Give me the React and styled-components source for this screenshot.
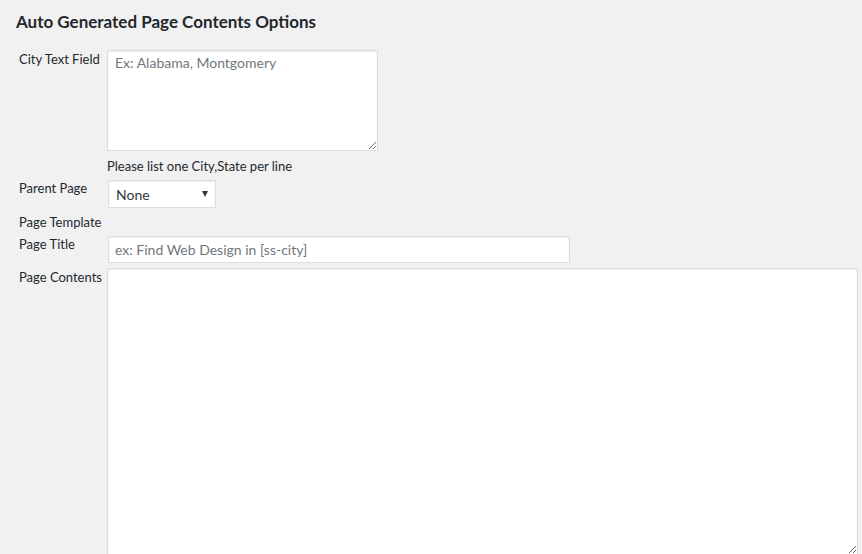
import styled, { createGlobalStyle } from "styled-components";

const GlobalStyle = createGlobalStyle`
  html, body {
    margin: 0;
    padding: 0;
    background: #f1f1f1;
  }
  body {
    font-family: Lato, "Open Sans", sans-serif;
    color: #23282d;
    font-size: 13px;
    overflow: hidden;
  }
`;

const Page = styled.div`
  padding: 11px 4px 0 16px;
`;

const Heading = styled.h2`
  margin: 0 0 17px;
  font-size: 17px;
  line-height: 22px;
  font-weight: 700;
  color: #23282d;
`;

const Form = styled.div`
  display: flex;
  flex-direction: column;
  padding-left: 3px;
`;

const Row = styled.div`
  display: grid;
  grid-template-columns: ${(p) => (p.$wide ? "88px 1fr" : "88px auto")};
  justify-content: start;
  align-items: start;
  margin-top: ${(p) => p.$gap || 0}px;
`;

const Label = styled.label`
  padding-top: ${(p) => p.$top || 0}px;
  font-size: 13px;
  line-height: 16px;
  color: #23282d;
  white-space: nowrap;
`;

const Field = styled.div`
  padding-left: ${(p) => p.$shift || 0}px;
`;

const fieldBase = `
  box-sizing: border-box;
  border: 1px solid #ddd;
  background: #fff;
  box-shadow: inset 0 1px 2px rgba(0, 0, 0, 0.07);
  color: #32373c;
  font-family: Lato, "Open Sans", sans-serif;
  font-size: 14px;
  outline: none;
  margin: 0;
  &::placeholder {
    color: #72777c;
  }
`;

const TextArea = styled.textarea`
  ${fieldBase}
  display: block;
  width: ${(p) => p.$w};
  height: ${(p) => p.$h}px;
  padding: 2px 7px;
  line-height: 20px;
`;

const TextInput = styled.input`
  ${fieldBase}
  display: block;
  width: 462px;
  height: 27px;
  padding: 0 6px;
`;

const Help = styled.p`
  margin: 0;
  padding-top: 7px;
  font-size: 13px;
  line-height: 16px;
  color: #23282d;
`;

const SelectWrap = styled.div`
  position: relative;
  width: 108px;
`;

const Select = styled.select`
  ${fieldBase}
  appearance: none;
  -webkit-appearance: none;
  display: block;
  width: 108px;
  height: 28px;
  padding: 0 24px 0 7px;
`;

const Arrow = styled.span`
  position: absolute;
  right: 8px;
  top: 11px;
  width: 0;
  height: 0;
  border-left: 3.5px solid transparent;
  border-right: 3.5px solid transparent;
  border-top: 6px solid #32373c;
  pointer-events: none;
`;

export default function App() {
  return (
    <Page>
      <GlobalStyle />
      <Heading>Auto Generated Page Contents Options</Heading>
      <Form>
        <Row>
          <Label $top={1}>City Text Field</Label>
          <Field>
            <TextArea $w="271px" $h={101} placeholder="Ex: Alabama, Montgomery" />
            <Help>Please list one City,State per line</Help>
          </Field>
        </Row>
        <Row $gap={6}>
          <Label>Parent Page</Label>
          <Field $shift={1}>
            <SelectWrap>
              <Select defaultValue="none">
                <option value="none">None</option>
              </Select>
              <Arrow />
            </SelectWrap>
          </Field>
        </Row>
        <Row $gap={6}>
          <Label>Page Template</Label>
        </Row>
        <Row $gap={6}>
          <Label>Page Title</Label>
          <Field $shift={1}>
            <TextInput placeholder="ex: Find Web Design in [ss-city]" />
          </Field>
        </Row>
        <Row $wide $gap={5}>
          <Label $top={1}>Page Contents</Label>
          <Field>
            <TextArea $w="751px" $h={287} />
          </Field>
        </Row>
      </Form>
    </Page>
  );
}
